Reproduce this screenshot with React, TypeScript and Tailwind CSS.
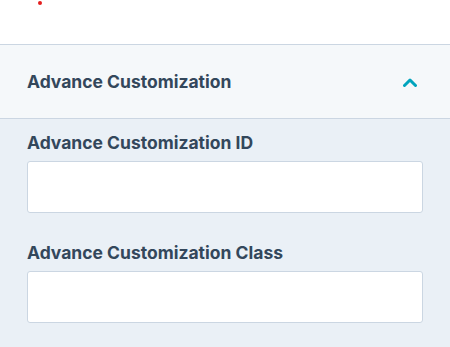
import React from 'react';

const fields = ['Advance Customization ID', 'Advance Customization Class'];

export default function App() {
  return (
    <div className="w-[450px] h-[347px] overflow-hidden bg-white text-[#33475b] font-['Inter',sans-serif]">
      {/* top area with cut-off required marker */}
      <div className="h-[44px] pl-[38px] pt-[1px]">
        <div className="w-[4px] h-[4px] rounded-full bg-[#e41e1e]" />
      </div>

      {/* Accordion header */}
      <div className="h-[75px] flex items-center justify-between pl-[27px] pr-[33px] bg-[#f5f8fa] border-y border-[#cbd6e2]">
        <span className="text-[17.5px] font-bold leading-[24px]">Advance Customization</span>
        <svg width="14" height="9" viewBox="0 0 14 9" fill="none" className="mt-[1px]">
          <polyline points="1.5,7.5 7,2 12.5,7.5" stroke="#00a4bd" strokeWidth="3" strokeLinecap="round" strokeLinejoin="round" />
        </svg>
      </div>

      {/* Accordion body */}
      <div className="h-[228px] bg-[#eaf0f6] px-[27px] pt-[12px] flex flex-col">
        {fields.map((label, i) => (
          <div key={label} className={i > 0 ? 'mt-[28px] flex flex-col' : 'flex flex-col'}>
            <label className="text-[17.5px] font-bold leading-[24px]">{label}</label>
            <input
              type="text"
              className="mt-[6px] h-[52px] w-full rounded-[3px] border border-[#cbd6e2] bg-white px-3 outline-none"
            />
          </div>
        ))}
      </div>
    </div>
  );
}
